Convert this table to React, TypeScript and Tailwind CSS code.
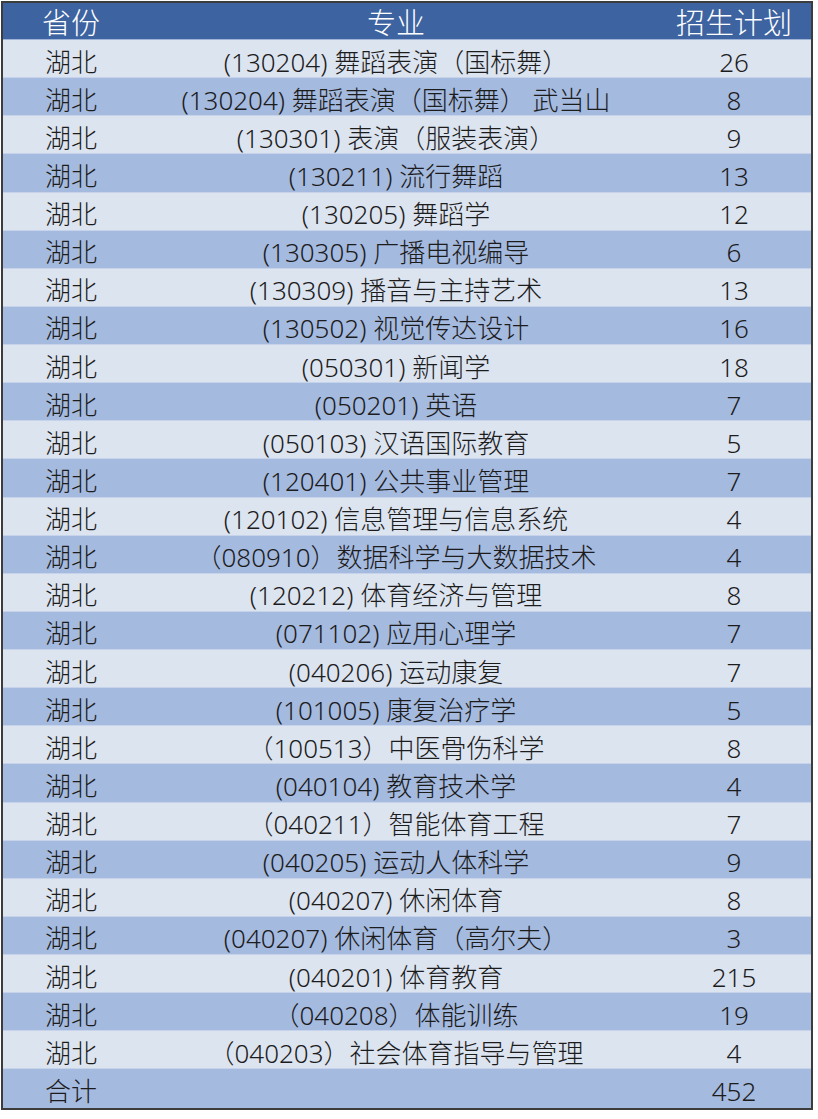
import React from "react";

const rows: [string, string][] = [
  ["(130204) 舞蹈表演（国标舞）", "26"],
  ["(130204) 舞蹈表演（国标舞） 武当山", "8"],
  ["(130301) 表演（服装表演）", "9"],
  ["(130211) 流行舞蹈", "13"],
  ["(130205) 舞蹈学", "12"],
  ["(130305) 广播电视编导", "6"],
  ["(130309) 播音与主持艺术", "13"],
  ["(130502) 视觉传达设计", "16"],
  ["(050301) 新闻学", "18"],
  ["(050201) 英语", "7"],
  ["(050103) 汉语国际教育", "5"],
  ["(120401) 公共事业管理", "7"],
  ["(120102) 信息管理与信息系统", "4"],
  ["（080910）数据科学与大数据技术", "4"],
  ["(120212) 体育经济与管理", "8"],
  ["(071102) 应用心理学", "7"],
  ["(040206) 运动康复", "7"],
  ["(101005) 康复治疗学", "5"],
  ["（100513）中医骨伤科学", "8"],
  ["(040104) 教育技术学", "4"],
  ["（040211）智能体育工程", "7"],
  ["(040205) 运动人体科学", "9"],
  ["(040207) 休闲体育", "8"],
  ["(040207) 休闲体育（高尔夫）", "3"],
  ["(040201) 体育教育", "215"],
  ["（040208）体能训练", "19"],
  ["（040203）社会体育指导与管理", "4"],
];

const font = { fontFamily: '"Noto Sans", "Noto Sans CJK SC", sans-serif' };

export default function App() {
  return (
    <div className="w-[818px] h-[1119px] bg-white" style={font}>
      <div className="ml-[1px] mt-[1px] w-[812px] border-2 border-[#3c3c3c] flex flex-col">
        <div className="h-[37px] bg-[#3d63a0] text-white text-[29px] font-light leading-none grid grid-cols-[136px_514px_1fr] items-center border-b border-[#9fb3d6]">
          <div className="text-center pt-[3px]">省份</div>
          <div className="text-center pt-[3px]">专业</div>
          <div className="text-center pt-[3px] pl-[4px]">招生计划</div>
        </div>
        {rows.map(([major, n], i) => (
          <div
            key={i}
            className={`h-[38.14px] text-[#1c1c1c] text-[26px] font-light leading-none grid grid-cols-[136px_514px_1fr] items-center border-b border-[#c6d3ea] ${
              i % 2 === 0 ? "bg-[#dce4f0]" : "bg-[#a5badf]"
            }`}
          >
            <div className="text-center pt-[6px]">湖北</div>
            <div className="text-center pt-[6px] whitespace-nowrap">{major}</div>
            <div className="text-center pt-[6px] pl-[4px]">{n}</div>
          </div>
        ))}
        <div className="h-[38.14px] text-[#1c1c1c] text-[26px] font-light leading-none grid grid-cols-[136px_514px_1fr] items-center bg-[#a5badf]">
          <div className="text-center pt-[6px]">合计</div>
          <div className="text-center pt-[6px]"></div>
          <div className="text-center pt-[6px] pl-[4px]">452</div>
        </div>
      </div>
    </div>
  );
}
